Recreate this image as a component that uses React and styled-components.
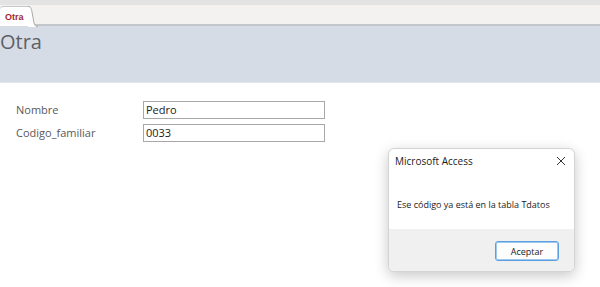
import React from "react";
import styled, { createGlobalStyle } from "styled-components";

const Global = createGlobalStyle`
  html, body { margin: 0; padding: 0; background: #ffffff; }
  body { width: 600px; height: 287px; overflow: hidden; font-family: "Open Sans", "Noto Sans", sans-serif; }
`;

const Page = styled.div`
  position: relative;
  width: 600px;
  height: 287px;
  background: #ffffff;
`;

const TopStrip = styled.div`
  height: 5px;
  background: #e3e3e3;
`;

const TabBar = styled.div`
  height: 19px;
  background: #f3f2f1;
  border-bottom: 2px solid #c3c6ca;
  display: flex;
  align-items: flex-end;
`;

const Tab = styled.div`
  position: relative;
  height: 20px;
  margin-bottom: -2px;
  width: 30px;
  background: #ffffff;
  border-top: 1px solid #c6c6c6;
  border-top-left-radius: 4px;
  box-sizing: border-box;
  padding-left: 5px;
  display: flex;
  align-items: center;
  font-family: "Liberation Sans", sans-serif;
  font-size: 9px;
  font-weight: bold;
  color: #a4262c;
`;

const TabCurve = styled.svg`
  position: absolute;
  left: 28px;
  top: -1px;
`;

const Header = styled.div`
  height: 56px;
  background: #d5dce6;
  border-bottom: 1px solid #e1e6ee;
`;

const Title = styled.div`
  font-family: "Open Sans", sans-serif;
  font-size: 20px;
  color: #5f6066;
  padding-top: 4px;
  line-height: 24px;
`;

const Form = styled.div`
  padding: 18px 0 0 16px;
  display: grid;
  grid-template-columns: 127px 182px;
  row-gap: 5px;
  align-items: center;
`;

const Label = styled.div`
  font-family: "Open Sans", sans-serif;
  font-size: 11px;
  color: #595959;
  line-height: 18px;
`;

const Field = styled.div`
  height: 18px;
  box-sizing: border-box;
  border: 1px solid #a8a8a8;
  font-family: "Open Sans", sans-serif;
  font-size: 11px;
  color: #1a1a1a;
  padding-left: 2px;
  line-height: 16px;
  background: #fff;
`;

const Dialog = styled.div`
  position: absolute;
  left: 388px;
  top: 148px;
  width: 187px;
  height: 124px;
  background: #ffffff;
  border: 1px solid #d4d4d4;
  border-radius: 6px;
  box-sizing: border-box;
  box-shadow: 0 4px 14px rgba(0, 0, 0, 0.22);
  overflow: hidden;
  display: flex;
  flex-direction: column;
  font-family: "Open Sans", sans-serif;
`;

const DialogHead = styled.div`
  height: 24px;
  display: flex;
  align-items: center;
  justify-content: space-between;
  padding: 0 8px 0 6px;
  font-size: 10px;
  color: #1b1b1b;
`;

const Close = styled.svg`
  display: block;
`;

const DialogBody = styled.div`
  flex: 1;
  display: flex;
  align-items: center;
  padding: 6px 8px 0;
  font-size: 9px;
  color: #1b1b1b;
`;

const DialogFoot = styled.div`
  height: 42px;
  box-sizing: border-box;
  background: #f0f0f0;
  display: flex;
  align-items: flex-start;
  justify-content: flex-end;
  padding: 12px 15px 0 0;
`;

const Button = styled.div`
  width: 64px;
  height: 20px;
  box-sizing: border-box;
  border: 1px solid #5a9ee0;
  box-shadow: inset 0 0 0 1px #9ec8f0;
  border-radius: 3px;
  background: #fdfdfd;
  display: flex;
  align-items: center;
  justify-content: center;
  font-size: 9px;
  color: #1b1b1b;
`;

export default function App() {
  return (
    <Page>
      <Global />
      <TopStrip />
      <TabBar>
        <Tab>
          Otra
          <TabCurve width="10" height="21" viewBox="0 0 10 21">
            <path d="M0 0.5 C3 0.5 3 2 4 6 L6 17 C7 20 8 20.5 10 20.5 L10 21 L0 21 Z" fill="#ffffff" />
            <path d="M0 0.5 C3 0.5 3 2 4 6 L6 17 C7 20 8 20.5 10 20.5" fill="none" stroke="#a9a9a9" strokeWidth="1" />
          </TabCurve>
        </Tab>
      </TabBar>
      <Header>
        <Title>Otra</Title>
      </Header>
      <Form>
        <Label>Nombre</Label>
        <Field>Pedro</Field>
        <Label>Codigo_familiar</Label>
        <Field>0033</Field>
      </Form>
      <Dialog>
        <DialogHead>
          <span>Microsoft Access</span>
          <Close width="10" height="10" viewBox="0 0 10 10">
            <path d="M1 1 L9 9 M9 1 L1 9" stroke="#333" strokeWidth="1" />
          </Close>
        </DialogHead>
        <DialogBody>Ese código ya está en la tabla Tdatos</DialogBody>
        <DialogFoot>
          <Button>Aceptar</Button>
        </DialogFoot>
      </Dialog>
    </Page>
  );
}
